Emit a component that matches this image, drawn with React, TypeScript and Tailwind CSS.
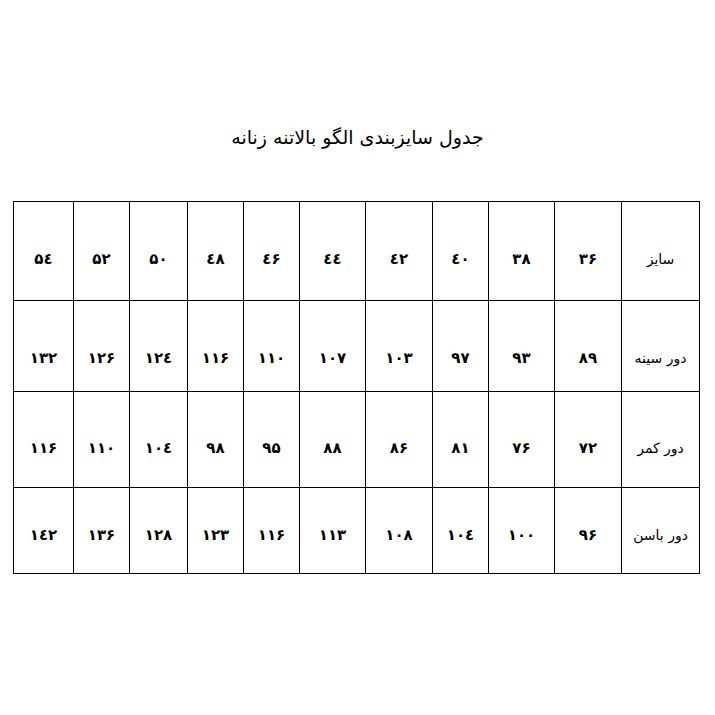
import React from "react";

const toFa = (n: number) =>
  String(n)
    .split("")
    .map((d) => "۰۱۲۳٤۵۶۷۸۹"[Number(d)])
    .join("");

const rows: { label: string; values: number[]; pad: string; h: string }[] = [
  { label: "سایز", values: [36, 38, 40, 42, 44, 46, 48, 50, 52, 54], pad: "pt-[16px]", h: "h-[98px]" },
  { label: "دور سینه", values: [89, 93, 97, 103, 107, 110, 116, 124, 126, 132], pad: "pt-[24px]", h: "h-[90px]" },
  { label: "دور کمر", values: [72, 76, 81, 86, 88, 95, 98, 104, 110, 116], pad: "pt-[18px]", h: "h-[95px]" },
  { label: "دور باسن", values: [96, 100, 104, 108, 113, 116, 123, 128, 136, 142], pad: "pt-[10px]", h: "h-[85px]" },
];

export default function App() {
  return (
    <div
      className="w-[715px] h-[715px] bg-white text-black"
      style={{ fontFamily: '"DejaVu Sans", "Noto Sans", sans-serif' }}
    >
      <div className="pt-[123px] text-center text-[19px] leading-[28px]" dir="rtl">
        جدول سایزبندی الگو بالاتنه زنانه
      </div>
      <div className="pl-[13px] pt-[50px]">
        <div
          dir="rtl"
          className="inline-grid grid-cols-[77px_66px_65px_55px_66px_65px_55px_55px_57px_55px_59px] gap-px p-px bg-black"
        >
          {rows.map((r) => (
            <React.Fragment key={r.label}>
              <div className={`bg-white ${r.h} ${r.pad} flex items-center justify-center text-[14px]`}>
                {r.label}
              </div>
              {r.values.map((v, i) => (
                <div
                  key={i}
                  className={`bg-white ${r.h} ${r.pad} flex items-center justify-center text-[15px] font-bold tracking-[-0.5px]`}
                >
                  {toFa(v)}
                </div>
              ))}
            </React.Fragment>
          ))}
        </div>
      </div>
    </div>
  );
}
